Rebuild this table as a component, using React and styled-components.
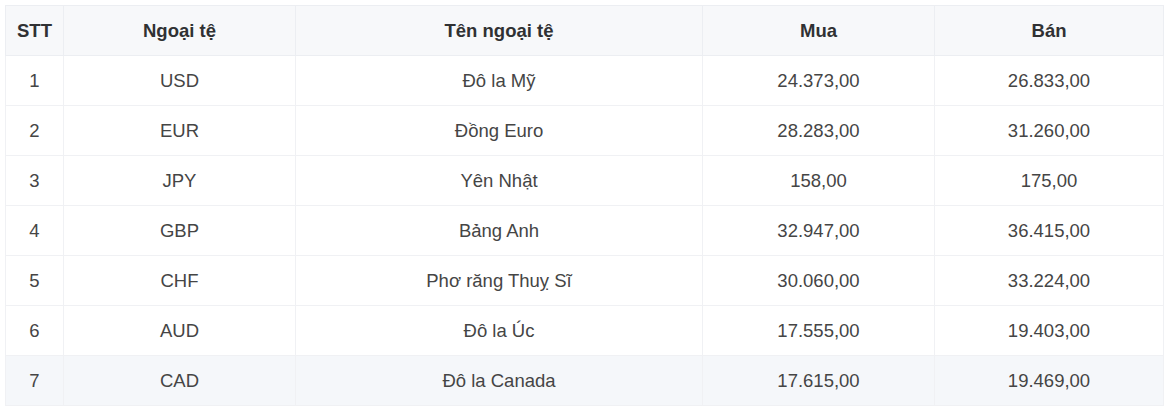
import React from "react";
import styled, { createGlobalStyle } from "styled-components";

const GlobalStyle = createGlobalStyle`
  html, body { margin: 0; padding: 0; background: #ffffff; }
  body { font-family: "Liberation Sans", Arial, sans-serif; }
`;

const Page = styled.div`
  padding: 5px 8px 0 5px;
`;

const Table = styled.table`
  width: 1158px;
  border-collapse: collapse;
  table-layout: fixed;
  font-family: "Liberation Sans", Arial, sans-serif;
  font-size: 18.5px;
  color: #454545;
  border: 1px solid #e9ecf1;
`;

const HeadCell = styled.th`
  height: 49px;
  padding: 0;
  background: #f7f8fa;
  color: #303133;
  font-weight: 700;
  text-align: center;
  border: 1px solid #eceef2;
`;

const Row = styled.tr`
  background: ${(p) => (p.$highlight ? "#f5f7fa" : "#ffffff")};
`;

const Cell = styled.td`
  height: 49px;
  padding: 0;
  text-align: center;
  border: 1px solid #f0f1f4;
`;

const columns = [
  { label: "STT", width: 58 },
  { label: "Ngoại tệ", width: 232 },
  { label: "Tên ngoại tệ", width: 407 },
  { label: "Mua", width: 232 },
  { label: "Bán", width: 229 },
];

const rows = [
  ["1", "USD", "Đô la Mỹ", "24.373,00", "26.833,00"],
  ["2", "EUR", "Đồng Euro", "28.283,00", "31.260,00"],
  ["3", "JPY", "Yên Nhật", "158,00", "175,00"],
  ["4", "GBP", "Bảng Anh", "32.947,00", "36.415,00"],
  ["5", "CHF", "Phơ răng Thuỵ Sĩ", "30.060,00", "33.224,00"],
  ["6", "AUD", "Đô la Úc", "17.555,00", "19.403,00"],
  ["7", "CAD", "Đô la Canada", "17.615,00", "19.469,00"],
];

export default function App() {
  return (
    <>
      <GlobalStyle />
      <Page>
        <Table>
          <colgroup>
            {columns.map((c) => (
              <col key={c.label} style={{ width: c.width }} />
            ))}
          </colgroup>
          <thead>
            <tr>
              {columns.map((c) => (
                <HeadCell key={c.label}>{c.label}</HeadCell>
              ))}
            </tr>
          </thead>
          <tbody>
            {rows.map((r, i) => (
              <Row key={r[0]} $highlight={i === rows.length - 1}>
                {r.map((v, j) => (
                  <Cell key={j}>{v}</Cell>
                ))}
              </Row>
            ))}
          </tbody>
        </Table>
      </Page>
    </>
  );
}
